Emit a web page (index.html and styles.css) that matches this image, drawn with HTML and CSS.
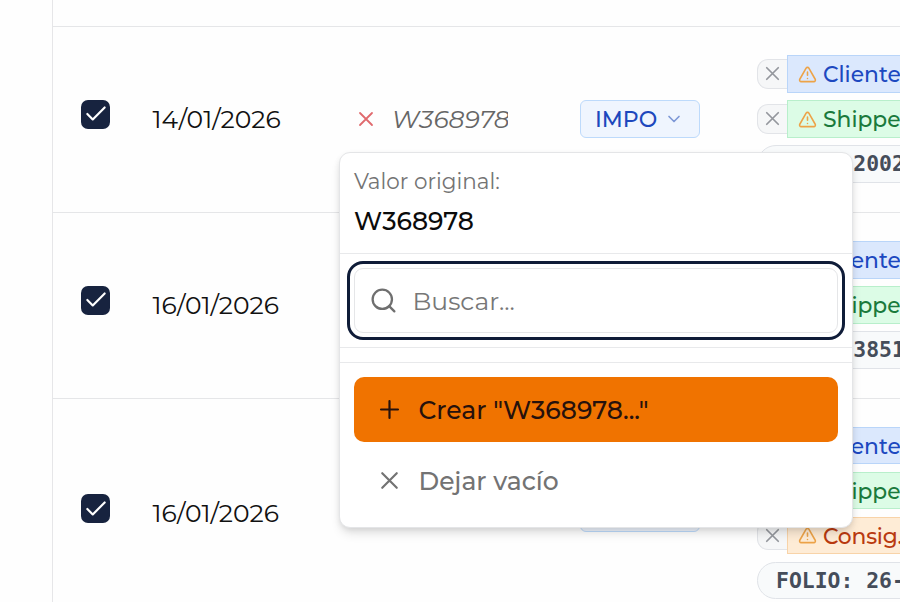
FILE: index.html
```
<!DOCTYPE html>
<html lang="es">
<head>
  <meta charset="UTF-8">
  <meta name="viewport" content="width=device-width, initial-scale=1.0">
  <title>Operaciones</title>
  <link rel="stylesheet" href="styles.css">
</head>
<body>

<!-- Iconos -->
<svg class="sprite" width="0" height="0">
  <symbol id="check" viewBox="0 0 24 24"><path d="M20 6 9 17l-5-5"/></symbol>
  <symbol id="x" viewBox="0 0 24 24"><path d="M18 6 6 18M6 6l12 12"/></symbol>
  <symbol id="plus" viewBox="0 0 24 24"><path d="M5 12h14M12 5v14"/></symbol>
  <symbol id="down" viewBox="0 0 24 24"><path d="m6 9 6 6 6-6"/></symbol>
  <symbol id="search" viewBox="0 0 24 24"><circle cx="11" cy="11" r="8"/><path d="m21 21-4.3-4.3"/></symbol>
  <symbol id="alert" viewBox="0 0 24 24"><path d="m21.73 18-8-14a2 2 0 0 0-3.48 0l-8 14A2 2 0 0 0 4 21h16a2 2 0 0 0 1.73-3M12 9v4M12 17h.01"/></symbol>
</svg>

<main class="table">
  <div class="row-head"></div>

  <div class="row">
    <span class="checkbox"><svg class="icon"><use href="#check"/></svg></span>
    <span class="date">14/01/2026</span>
    <div class="value">
      <svg class="icon"><use href="#x"/></svg>
      <em>W368978</em>
    </div>
    <div class="type">IMPO <svg class="icon"><use href="#down"/></svg></div>
    <div class="tags">
      <div class="tag blue"><span class="remove"><svg class="icon"><use href="#x"/></svg></span><span class="label"><svg class="icon"><use href="#alert"/></svg>Cliente</span></div>
      <div class="tag green"><span class="remove"><svg class="icon"><use href="#x"/></svg></span><span class="label"><svg class="icon"><use href="#alert"/></svg>Shipper</span></div>
      <div class="ref">GUIA: 2002</div>
    </div>
  </div>

  <div class="row">
    <span class="checkbox"><svg class="icon"><use href="#check"/></svg></span>
    <span class="date">16/01/2026</span>
    <div class="value"></div>
    <div class="type">IMPO <svg class="icon"><use href="#down"/></svg></div>
    <div class="tags">
      <div class="tag blue"><span class="remove"><svg class="icon"><use href="#x"/></svg></span><span class="label"><svg class="icon"><use href="#alert"/></svg>Cliente</span></div>
      <div class="tag green"><span class="remove"><svg class="icon"><use href="#x"/></svg></span><span class="label"><svg class="icon"><use href="#alert"/></svg>Shipper</span></div>
      <div class="ref">GUIA: 3851</div>
    </div>
  </div>

  <div class="row tall">
    <span class="checkbox"><svg class="icon"><use href="#check"/></svg></span>
    <span class="date">16/01/2026</span>
    <div class="value"></div>
    <div class="type">IMPO <svg class="icon"><use href="#down"/></svg></div>
    <div class="tags">
      <div class="tag blue"><span class="remove"><svg class="icon"><use href="#x"/></svg></span><span class="label"><svg class="icon"><use href="#alert"/></svg>Cliente</span></div>
      <div class="tag green"><span class="remove"><svg class="icon"><use href="#x"/></svg></span><span class="label"><svg class="icon"><use href="#alert"/></svg>Shipper</span></div>
      <div class="tag orange"><span class="remove"><svg class="icon"><use href="#x"/></svg></span><span class="label"><svg class="icon"><use href="#alert"/></svg>Consig.</span></div>
      <div class="ref">FOLIO: 26-</div>
    </div>
  </div>
</main>

<!-- Menú desplegable del valor -->
<div class="popover">
  <div class="popover-head">
    <p class="caption">Valor original:</p>
    <p class="original">W368978</p>
  </div>
  <div class="search-wrap">
    <label class="search">
      <svg class="icon"><use href="#search"/></svg>
      <input type="text" placeholder="Buscar...">
    </label>
  </div>
  <div class="options">
    <button class="option create"><svg class="icon"><use href="#plus"/></svg><span>Crear "W368978..."</span></button>
    <button class="option empty"><svg class="icon"><use href="#x"/></svg><span>Dejar vacío</span></button>
  </div>
</div>

</body>
</html>
```

FILE: styles.css
```
* {
  margin: 0;
  padding: 0;
  box-sizing: border-box;
}
body {
  height: 602px;
  overflow: hidden;
  background: #fefefe;
  color: #111;
  font-family: Montserrat, Inter, sans-serif;
  font-size: 25px;
}
.sprite {
  position: absolute;
}
.icon {
  flex: none;
  width: 24px;
  height: 24px;
  fill: none;
  stroke: currentColor;
  stroke-width: 2;
  stroke-linecap: round;
  stroke-linejoin: round;
}

/* Tabla */
.table {
  width: 900px;
  height: 602px;
  padding-left: 52px;
  overflow: hidden;
}
.row-head {
  height: 27px;
  border-left: 1px solid #e6e6e8;
  border-bottom: 1px solid #e5e6e8;
}
.row {
  display: grid;
  grid-template-columns: 71px 202px 226px 177px 200px;
  align-items: center;
  height: 186px;
  padding-left: 28px;
  padding-bottom: 1px;
  border-left: 1px solid #e6e6e8;
  border-bottom: 1px solid #e5e6e8;
}
.row.tall {
  height: 230px;
}
.checkbox {
  display: flex;
  align-items: center;
  justify-content: center;
  width: 29px;
  height: 29px;
  margin-bottom: 10px;
  border-radius: 7px;
  background: #17233f;
  color: #fff;
}
.checkbox .icon {
  width: 26px;
  height: 26px;
}
.tall .checkbox {
  margin-bottom: 9px;
}
.date {
  padding: 0 0 1px 0.5px;
}
.value {
  display: flex;
  align-items: center;
  gap: 14px;
  padding-bottom: 1px;
  color: #e06a6e;
}
.value em {
  width: 116px;
  overflow: hidden;
  white-space: nowrap;
  color: #666;
}
.value .icon {
  stroke-width: 1.8;
}
.type {
  display: flex;
  align-items: center;
  justify-content: space-between;
  width: 120px;
  height: 38px;
  padding: 0 15px 0 14px;
  border: 1px solid #bddafb;
  border-radius: 6px;
  background: #eff5fe;
  color: #1d48bd;
  font-size: 22px;
  font-weight: 500;
}
.type .icon {
  width: 20px;
  height: 20px;
  color: #7d97d6;
}
.tags {
  display: flex;
  flex-direction: column;
  gap: 7.5px;
}
.tag {
  display: flex;
  align-items: center;
  height: 37.5px;
  font-size: 21.8px;
  font-weight: 500;
}
.remove {
  display: flex;
  align-items: center;
  justify-content: center;
  width: 30px;
  height: 30px;
  margin-bottom: 1px;
  border: 1px solid #e2e4e8;
  border-right: 0;
  border-radius: 11px 0 0 11px;
  background: #f6f7f8;
  color: #94979d;
}
.remove .icon {
  width: 23px;
  height: 23px;
  stroke-width: 1.8;
}
.label {
  display: flex;
  align-items: center;
  gap: 6px;
  width: 170px;
  height: 100%;
  padding-left: 10px;
  border: 1px solid;
}
.label .icon {
  width: 19px;
  height: 19px;
  color: #eda348;
}
.blue .label {
  background: #dbe8fd;
  border-color: #b9d5f9;
  color: #1d48c0;
}
.green .label {
  background: #dcfce6;
  border-color: #b8efcb;
  color: #1a7a3c;
}
.orange .label {
  letter-spacing: -0.2px;
  background: #feecd6;
  border-color: #f8d3a8;
  color: #b93a10;
}
.ref {
  height: 37.5px;
  padding-left: 18px;
  border: 1px solid #e0e3e8;
  border-radius: 19px;
  background: #f8fafb;
  color: #454d5a;
  font: bold 21.4px/35px "DejaVu Sans Mono", monospace;
  white-space: nowrap;
}

/* Popover */
.popover {
  position: absolute;
  top: 152px;
  left: 339px;
  width: 514px;
  height: 376px;
  border: 1px solid #e4e5e7;
  border-radius: 11px;
  background: #fff;
  box-shadow: 0 7px 11px -2px rgba(0, 0, 0, 0.12), 0 2px 6px -1px rgba(0, 0, 0, 0.1);
}
.popover-head {
  height: 101px;
  padding: 13px 14px 0;
  border-bottom: 1px solid #e8e9eb;
}
.caption {
  font-size: 21.5px;
  line-height: 30px;
  color: #737373;
}
.original {
  margin-top: 7px;
  font-weight: 500;
  line-height: 36px;
  color: #0b0b0b;
}
.search-wrap {
  height: 94px;
  padding: 14px;
  border-bottom: 1px solid #e8e9eb;
}
.search {
  display: flex;
  align-items: center;
  gap: 15px;
  height: 65px;
  padding-left: 13.5px;
  border: 1px solid #e5e6e8;
  border-radius: 9px;
  outline: 3px solid #0f1c38;
  outline-offset: 4px;
  color: #6f6f6f;
}
.search .icon {
  width: 29px;
  height: 29px;
  stroke-width: 1.9;
}
.search input {
  width: 380px;
  border: 0;
  outline: 0;
  background: none;
  font: inherit;
}
.search input::placeholder {
  color: #777;
}
.options {
  margin-top: 14px;
  padding: 14px;
  border-top: 1px solid #e8e9eb;
}
.option {
  display: flex;
  align-items: center;
  gap: 14.5px;
  width: 484px;
  height: 65px;
  padding-left: 21px;
  border: 0;
  border-radius: 10px;
  background: none;
  font: inherit;
  font-weight: 500;
}
.option .icon {
  width: 29px;
  height: 29px;
  stroke-width: 1.8;
}
.create {
  background: #f07300;
  color: #26110c;
}
.empty {
  margin-top: 6px;
  color: #737373;
}
```
